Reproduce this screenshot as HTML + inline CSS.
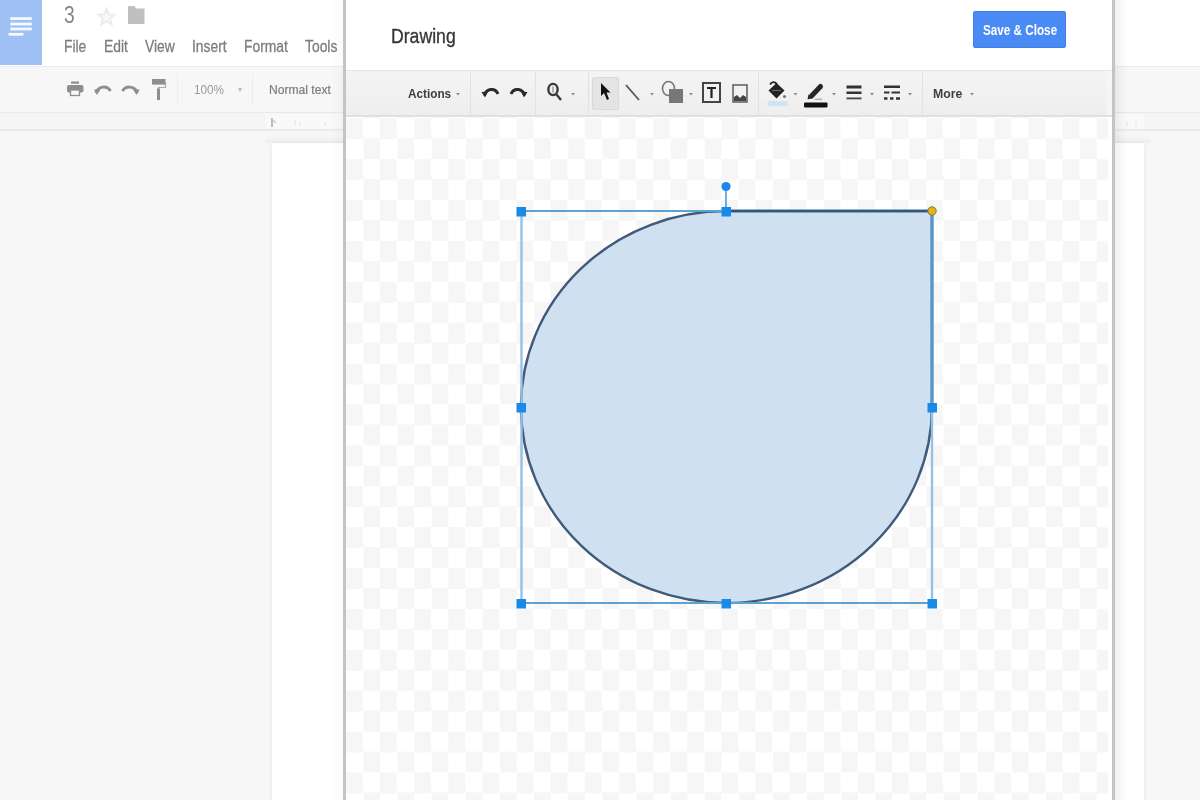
<!DOCTYPE html>
<html><head><meta charset="utf-8">
<style>
*{margin:0;padding:0;box-sizing:border-box}
html,body{width:1200px;height:800px;overflow:hidden;background:#f7f7f7;font-family:"Liberation Sans",sans-serif}
.a{position:absolute}
.t{position:absolute;white-space:nowrap;transform-origin:0 0;line-height:1}
</style></head><body><div id="w" style="position:absolute;left:0;top:0;width:1200px;height:800px;filter:blur(.6px)">
<!-- ===== Docs background ===== -->
<div class="a" style="left:0;top:0;width:1200px;height:66px;background:#fff"></div>
<div class="a" style="left:0;top:0;width:42px;height:65px;background:#9fc0f5"></div>
<svg class="a" style="left:0;top:0" width="42" height="65">
 <g fill="#f4f8ff"><rect x="10.3" y="17.2" width="21.5" height="2.8"/><rect x="10.3" y="22.6" width="21.5" height="2.8"/><rect x="10.3" y="27.6" width="21.5" height="2.8"/><rect x="8.6" y="32.9" width="14.8" height="2.8"/></g>
</svg>
<div class="t" style="left:64px;top:3px;font-size:24px;color:#858585;transform:scaleX(.8)">3</div>
<svg class="a" style="left:96px;top:6px" width="22" height="20"><path d="M10.5 2.5 L12.8 8.5 L18.5 8.7 L14 12.5 L15.7 18.5 L10.5 15 L5.3 18.5 L7 12.5 L2.5 8.7 L8.2 8.5 Z" fill="#f8f8f8" stroke="#ebebeb" stroke-width="1.8"/></svg>
<svg class="a" style="left:127px;top:6px" width="20" height="20"><path d="M1 0 H7.5 L9 2.5 H17.5 V18 H1 Z" fill="#c0c0c0"/></svg>
<div class="t" style="left:64px;top:38px;font-size:16.5px;color:#7d7d7d;-webkit-text-stroke:.3px #7d7d7d;transform:scaleX(.84)">File</div>
<div class="t" style="left:104px;top:38px;font-size:16.5px;color:#7d7d7d;-webkit-text-stroke:.3px #7d7d7d;transform:scaleX(.84)">Edit</div>
<div class="t" style="left:145px;top:38px;font-size:16.5px;color:#7d7d7d;-webkit-text-stroke:.3px #7d7d7d;transform:scaleX(.84)">View</div>
<div class="t" style="left:192px;top:38px;font-size:16.5px;color:#7d7d7d;-webkit-text-stroke:.3px #7d7d7d;transform:scaleX(.84)">Insert</div>
<div class="t" style="left:244px;top:38px;font-size:16.5px;color:#7d7d7d;-webkit-text-stroke:.3px #7d7d7d;transform:scaleX(.84)">Format</div>
<div class="t" style="left:305px;top:38px;font-size:16.5px;color:#7d7d7d;-webkit-text-stroke:.3px #7d7d7d;transform:scaleX(.84)">Tools</div>
<!-- docs toolbar -->
<div class="a" style="left:0;top:66px;width:1200px;height:1px;background:#ececec"></div>
<div class="a" style="left:0;top:67px;width:1200px;height:45px;background:#f7f7f7"></div>
<div class="a" style="left:0;top:112px;width:1200px;height:1px;background:#e9e9e9"></div>
<div class="a" style="left:177px;top:74px;width:1px;height:32px;background:#ececec"></div>
<div class="a" style="left:252px;top:74px;width:1px;height:32px;background:#ececec"></div>
<svg class="a" style="left:60px;top:75px" width="115" height="30">
 <g fill="#8e8e8e">
  <rect x="11" y="6.5" width="8" height="2.2"/><rect x="7" y="10" width="16.5" height="7.5" rx="2"/>
 </g>
 <rect x="10.5" y="15" width="9" height="5.5" fill="#f7f7f7" stroke="#8e8e8e" stroke-width="1.3"/>
 <path d="M36 18 C38 11, 47 10, 50.5 16" fill="none" stroke="#8e8e8e" stroke-width="3"/><path d="M34 14.5 L40.5 14.5 L37 20 Z" fill="#8e8e8e"/>
 <path d="M62.5 16 C66 10, 75 11, 77.5 18" fill="none" stroke="#8e8e8e" stroke-width="3"/><path d="M79.5 14.5 L73 14.5 L76.5 20 Z" fill="#8e8e8e"/>
 <rect x="92" y="4" width="13.5" height="5.6" fill="#8e8e8e"/><path d="M105.5 7 V12.5 H98.5 V14" fill="none" stroke="#a8a8a8" stroke-width="1.2"/><rect x="97" y="13.5" width="3" height="11.5" fill="#8e8e8e"/>
</svg>
<div class="t" style="left:194px;top:83px;font-size:13px;color:#999;transform:scaleX(.9)">100%</div>
<div class="t" style="left:238px;top:86px;font-size:8px;color:#bbb">&#9662;</div>
<div class="t" style="left:269px;top:83px;font-size:13px;color:#7c7c7c;-webkit-text-stroke:.2px #7c7c7c;transform:scaleX(.93)">Normal text</div>
<!-- ruler -->
<div class="a" style="left:0;top:113px;width:1200px;height:17px;background:#f5f5f5"></div>
<div class="a" style="left:266px;top:114px;width:878px;height:14px;background:#f9f9f9"></div>
<div class="a" style="left:0;top:129px;width:1200px;height:1.5px;background:#ebebeb"></div>
<svg class="a" style="left:262px;top:114px" width="90" height="16"><path d="M10 4 V13" stroke="#b2b2b2" stroke-width="1.8"/><path d="M10 5 L14 9" stroke="#d0d0d0" stroke-width="1.5"/><path d="M33 6 V12 M38 8 V12 M63 8 V12" stroke="#e4e4e4" stroke-width="1"/></svg>
<svg class="a" style="left:1120px;top:114px" width="40" height="16"><path d="M7 7 V12 M16 5 V12" stroke="#e4e4e4" stroke-width="1"/></svg>
<!-- page -->
<div class="a" style="left:266px;top:135px;width:884px;height:8px;background:linear-gradient(to bottom,rgba(0,0,0,0),rgba(0,0,0,.035))"></div>
<div class="a" style="left:272px;top:143px;width:872px;height:700px;background:#fff;box-shadow:0 0 4px rgba(0,0,0,.09)"></div>

<!-- ===== Dialog ===== -->
<div class="a" style="left:1115px;top:0;width:12px;height:800px;background:linear-gradient(to right,rgba(0,0,0,.06),rgba(0,0,0,0))"></div>
<div class="a" style="left:330px;top:0;width:14px;height:800px;background:linear-gradient(to left,rgba(0,0,0,.025),rgba(0,0,0,0))"></div>
<div class="a" style="left:343px;top:0;width:772px;height:800px;background:#fff;border-left:3px solid #c4c4c4;border-right:3px solid #c4c4c4"></div>
<div class="t" style="left:391px;top:25px;font-size:21px;color:#363636;-webkit-text-stroke:.35px #363636;transform:scaleX(.84)">Drawing</div>
<div class="a" style="left:973px;top:11px;width:93px;height:37px;background:#4a8af4;border-radius:2px;border:1px solid #3f7fe9"></div>
<div class="t" style="left:983px;top:22px;font-size:15px;font-weight:bold;color:#fff;transform:scaleX(.78)">Save &amp; Close</div>
<!-- dialog toolbar -->
<div class="a" style="left:346px;top:70px;width:766px;height:1px;background:#e6e6e6"></div>
<div class="a" style="left:346px;top:71px;width:766px;height:44px;background:linear-gradient(#f4f4f4,#eeeeee)"></div><div class="a" style="left:1106px;top:71px;width:6px;height:44px;background:#f5f5f5"></div>
<div class="a" style="left:346px;top:115px;width:766px;height:2px;background:#e0e0e0"></div>

<!-- separators -->
<div class="a" style="left:470px;top:72px;width:1px;height:43px;background:#e2e2e2"></div>
<div class="a" style="left:535px;top:72px;width:1px;height:43px;background:#e2e2e2"></div>
<div class="a" style="left:588px;top:72px;width:1px;height:43px;background:#e2e2e2"></div>
<div class="a" style="left:758px;top:72px;width:1px;height:43px;background:#e2e2e2"></div>
<div class="a" style="left:922px;top:72px;width:1px;height:43px;background:#e2e2e2"></div>
<div class="t" style="left:408px;top:88px;font-size:12.5px;font-weight:bold;color:#3e3e3e;transform:scaleX(.94)">Actions</div>
<div class="t" style="left:933px;top:88px;font-size:12.5px;font-weight:bold;color:#3e3e3e;transform:scaleX(.98)">More</div>
<!-- selected button -->
<div class="a" style="left:592px;top:77px;width:27px;height:33px;background:#e4e4e4;border:1px solid #dadada;border-radius:2px"></div>
<svg class="a" style="left:346px;top:71px" width="766" height="44">
 <g fill="#888">
  <path d="M110 22 l4 0 l-2 2.5z"/>
  <path d="M225 22 l4 0 l-2 2.5z"/>
  <path d="M304 22 l4 0 l-2 2.5z"/>
  <path d="M343 22 l4 0 l-2 2.5z"/>
  <path d="M447.5 22 l4 0 l-2 2.5z"/>
  <path d="M486 22 l4 0 l-2 2.5z"/>
  <path d="M524 22 l4 0 l-2 2.5z"/>
  <path d="M562 22 l4 0 l-2 2.5z"/>
  <path d="M624 22 l4 0 l-2 2.5z"/>
 </g>
 <!-- undo/redo -->
 <path d="M138.5 24.5 C140 17.5, 149 16, 152 23" fill="none" stroke="#2a2a2a" stroke-width="3"/><path d="M135.5 21 L142 20.5 L139 26.5 Z" fill="#2a2a2a"/>
 <path d="M165 23 C168 16, 177 17.5, 178.5 24.5" fill="none" stroke="#2a2a2a" stroke-width="3"/><path d="M181.5 21 L175 20.5 L178 26.5 Z" fill="#2a2a2a"/>
 <!-- zoom -->
 <ellipse cx="207" cy="18.5" rx="4.6" ry="5.6" fill="none" stroke="#3a3a3a" stroke-width="2.4"/><path d="M207 15.5 V21.5" stroke="#888" stroke-width="1.2"/><path d="M210.5 23.5 L215 29" stroke="#3a3a3a" stroke-width="2.4"/>
 <!-- cursor -->
 <path d="M255 12 L255 25 L258 22 L261 29 L263 28 L260.5 21.5 L264.5 21.5 Z" fill="#111"/>
 <!-- line -->
 <path d="M280 14 L293 29" stroke="#555" stroke-width="1.8"/>
 <!-- shape -->
 <ellipse cx="322.5" cy="17.5" rx="6" ry="7" fill="none" stroke="#777" stroke-width="1.6"/>
 <rect x="323" y="18" width="14" height="14" fill="#777"/>
 <!-- textbox -->
 <rect x="357" y="12" width="17" height="19" fill="none" stroke="#444" stroke-width="2"/>
 <path d="M361 17 H370 M365.5 17 V27" stroke="#222" stroke-width="2.2"/>
 <!-- image -->
 <rect x="387" y="14" width="14" height="17" fill="none" stroke="#666" stroke-width="1.6"/>
 <path d="M388 30 L388 26 L391 24 L394 27 L397 24 L400 26 L400 30 Z" fill="#444"/>
 <!-- paint bucket -->
 <path d="M422.5 19.5 L430.5 12 L438.5 19.5 L430.5 27.5 Z" fill="#222"/><path d="M424 13.5 Q427 9 431 13" fill="none" stroke="#222" stroke-width="1.8"/><path d="M426 19.5 H435" stroke="#666" stroke-width="1.2"/><circle cx="438.5" cy="25.5" r="1.6" fill="#777"/>
 <rect x="421.5" y="30" width="20" height="5" fill="#d2e3f1"/>
 <!-- pencil -->
 <path d="M465.5 25 L474.5 15.5" stroke="#262626" stroke-width="5" stroke-linecap="round"/><path d="M461.5 28.5 L462.5 23.5 L466.5 27 Z" fill="#262626"/><path d="M469 28.3 H476" stroke="#aaa" stroke-width="1.3"/>
 <rect x="458" y="31.5" width="23.5" height="5" fill="#111" rx="1"/>
 <!-- line weight -->
 <rect x="500.5" y="14.5" width="15" height="3" fill="#333"/><rect x="500.5" y="20.5" width="15" height="2.5" fill="#333"/><rect x="500.5" y="26.5" width="15" height="1.8" fill="#444"/>
 <!-- dash -->
 <rect x="538" y="14.5" width="16" height="2.5" fill="#333"/><path d="M538 21.5 H543.5 M545.5 21.5 H554" stroke="#333" stroke-width="2"/><path d="M538 27.5 H541.5 M544 27.5 H547.5 M550 27.5 H554" stroke="#333" stroke-width="2.6"/>
</svg>
<!-- canvas -->
<div class="a" style="left:346px;top:117px;width:762px;height:683px;background:repeating-conic-gradient(#fff 0 25%,#f6f6f6 0 50%);background-size:34.14px 40.9px;background-position:0 1.25px"></div>
<svg class="a" style="left:0;top:0" width="1200" height="800">
 <path d="M726.5 211 L932 211 L932 407 A205.5 196 0 0 1 726.5 603 A205.5 196 0 0 1 521 407 A205.5 196 0 0 1 726.5 211 Z" fill="#cfe0f1" stroke="#41597a" stroke-width="2.4"/>
 <path d="M520 211 H933 M520 603 H933" stroke="#5ca2d2" stroke-width="2"/><path d="M521.5 211 V603 M932 211 V603" stroke="#92c2e4" stroke-width="2.4"/>
 <path d="M726.5 211 H932" fill="none" stroke="#2d5784" stroke-width="2.6"/><path d="M932 211 V407" fill="none" stroke="#5893ca" stroke-width="3"/>
 <line x1="726" y1="191" x2="726" y2="207" stroke="#4a9ae6" stroke-width="1.6"/>
 <circle cx="726" cy="186.5" r="4.6" fill="#1a8ae8"/>
 <g fill="#1a8ae8">
  <rect x="516.5" y="207.0" width="9.5" height="9.5"/>
  <rect x="721.5" y="207.0" width="9.5" height="9.5"/>
  <rect x="516.5" y="403.0" width="9.5" height="9.5"/>
  <rect x="927.5" y="403.0" width="9.5" height="9.5"/>
  <rect x="516.5" y="599.0" width="9.5" height="9.5"/>
  <rect x="721.5" y="599.0" width="9.5" height="9.5"/>
  <rect x="927.5" y="599.0" width="9.5" height="9.5"/>
 </g>
 <circle cx="932" cy="211" r="4.2" fill="#e7b416" stroke="#7a7a3a" stroke-width="1"/>
</svg>
</div></body></html>
